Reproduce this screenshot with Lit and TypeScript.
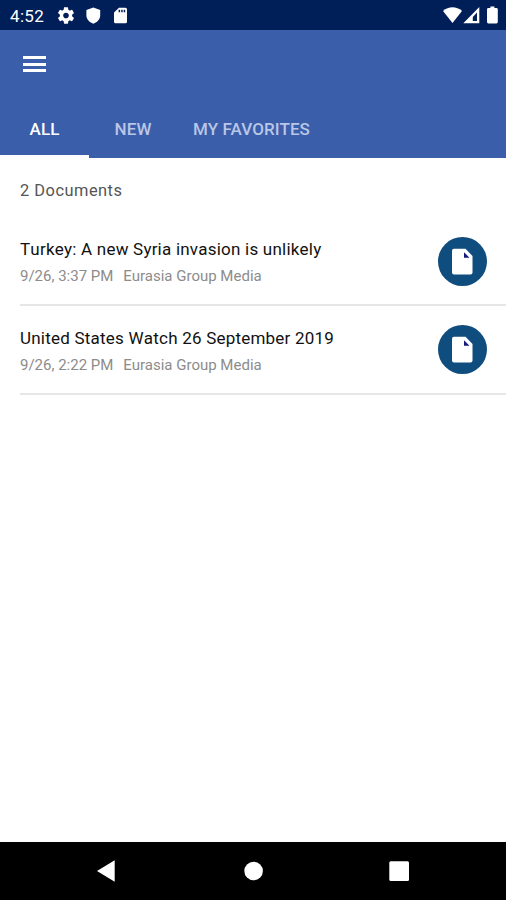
import { LitElement, html, css } from "lit";
import { customElement, property } from "lit/decorators.js";

interface Doc {
  title: string;
  date: string;
  source: string;
}

@customElement("status-bar")
class StatusBar extends LitElement {
  static styles = css`
    :host {
      display: flex;
      justify-content: space-between;
      height: 30px;
      background: #001e57;
      color: #fff;
      font: 400 17px/32px Roboto, sans-serif;
    }
    .side {
      display: flex;
      align-items: flex-start;
    }
    .time {
      width: 46px;
      padding-left: 10px;
      letter-spacing: 0.35px;
    }
    svg {
      display: block;
      fill: #fff;
    }
  `;
  render() {
    return html`
      <div class="side">
        <span class="time">4:52</span>
        <svg width="80" height="30" viewBox="56 0 80 30">
          <svg x="56.2" y="5.7" width="19.6" height="19.6" viewBox="0 0 24 24">
            <path
              d="M19.43 12.98c.04-.32.07-.64.07-.98s-.03-.66-.07-.98l2.11-1.65c.19-.15.24-.42.12-.64l-2-3.46c-.12-.22-.39-.3-.61-.22l-2.49 1c-.52-.4-1.08-.73-1.69-.98l-.38-2.65A.49.49 0 0 0 14 2h-4c-.25 0-.46.18-.49.42l-.38 2.65c-.61.25-1.17.59-1.69.98l-2.49-1c-.23-.09-.49 0-.61.22l-2 3.46c-.13.22-.07.49.12.64l2.11 1.65c-.04.32-.07.65-.07.98s.03.66.07.98l-2.11 1.65c-.19.15-.24.42-.12.64l2 3.46c.12.22.39.3.61.22l2.49-1c.52.4 1.08.73 1.69.98l.38 2.65c.03.24.24.42.49.42h4c.25 0 .46-.18.49-.42l.38-2.65c.61-.25 1.17-.59 1.69-.98l2.49 1c.23.09.49 0 .61-.22l2-3.46c.12-.22.07-.49-.12-.64l-2.11-1.65zM12 15.5c-1.93 0-3.5-1.57-3.5-3.5s1.57-3.5 3.5-3.5 3.5 1.57 3.5 3.5-1.57 3.5-3.5 3.5z"
            />
          </svg>
          <path d="M93.3 7.4l6.9 2.5v5.3c0 3.9-2.7 6.9-6.9 8.5-4.2-1.6-6.9-4.6-6.9-8.5V9.9z" />
          <path
            fill-rule="evenodd"
            d="M119 7.7h6.4q1.6 0 1.6 1.6v12.4q0 1.6-1.6 1.6h-9.8q-1.6 0-1.6-1.6V12.5zM118.6 9.8v2.4h1.5V9.8zM121.2 9.8v2.4h1.5V9.8zM123.7 9.8v2.4h1.5V9.8z"
          />
        </svg>
      </div>
      <svg width="66" height="30" viewBox="440 0 66 30">
        <path d="M443 11C448.5 6.100 456.500 6.100 462 11L452.500 23z" />
        <path fill-rule="evenodd" d="M479.300 7V23.200H463.300zM477 12.600L472.800 17V21H477z" />
        <path
          d="M490.400 8V6.500h4V8h2q1.400 0 1.400 1.400v12.700q0 1.400-1.400 1.400h-8q-1.400 0-1.400-1.400V9.400Q487 8 488.400 8z"
        />
      </svg>
    `;
  }
}

@customElement("app-header")
class AppHeader extends LitElement {
  static styles = css`
    :host {
      display: flex;
      flex-direction: column;
      height: 128px;
      background: #3b5eaa;
      font: 500 17px/20px Roboto, sans-serif;
    }
    .menu {
      display: flex;
      flex-direction: column;
      gap: 3.6px;
      padding: 26px 0 0 23px;
      height: 43px;
    }
    .bar {
      width: 23px;
      height: 3px;
      background: #fff;
    }
    .tabs {
      display: flex;
      height: 59px;
    }
    .tab {
      box-sizing: border-box;
      padding-top: 20px;
      height: 59px;
      color: #b9c6e6;
      text-align: center;
      white-space: nowrap;
      letter-spacing: 0.1px;
    }
    .all {
      width: 89px;
      color: #fff;
      border-bottom: 3px solid #fff;
    }
    .new {
      width: 88px;
    }
    .fav {
      width: 149px;
    }
  `;
  render() {
    return html`
      <div class="menu">
        <span class="bar"></span><span class="bar"></span><span class="bar"></span>
      </div>
      <div class="tabs">
        <div class="tab all">ALL</div>
        <div class="tab new">NEW</div>
        <div class="tab fav">MY FAVORITES</div>
      </div>
    `;
  }
}

@customElement("document-row")
class DocumentRow extends LitElement {
  @property({ attribute: false }) doc!: Doc;
  static styles = css`
    :host {
      display: flex;
      justify-content: space-between;
      box-sizing: border-box;
      height: 88.3px;
      margin-left: 20px;
      padding: 19px 19px 0 0;
      border-bottom: 2px solid #e6e6e6;
      font-family: Roboto, sans-serif;
      white-space: nowrap;
    }
    .title {
      padding-top: 1.45px;
      font-size: 17px;
      line-height: 22px;
      color: #111;
      letter-spacing: 0.22px;
      font-kerning: none;
    }
    .meta {
      display: flex;
      gap: 10px;
      margin-top: 5.85px;
      font-size: 15px;
      line-height: 20px;
      color: #8c8c8c;
    }
    .badge {
      display: block;
      width: 49px;
      height: 49px;
    }
  `;
  render() {
    return html`
      <div>
        <div class="title">${this.doc.title}</div>
        <div class="meta"><span>${this.doc.date}</span><span>${this.doc.source}</span></div>
      </div>
      <svg class="badge" viewBox="0 0 49 49">
        <circle cx="24.5" cy="24.5" r="24.5" fill="#104d7f" />
        <path
          fill="#fff"
          d="M16 11.800h11.500l7 7.200v16.600q0 2-2 2h-16.500q-2 0-2-2V13.800q0-2 2-2z"
        />
        <path fill="#151a78" d="M26 15.200v5.500h5.500z" />
      </svg>
    `;
  }
}

@customElement("nav-bar")
class NavBar extends LitElement {
  static styles = css`
    :host {
      display: block;
      height: 58px;
      background: #000;
    }
    svg {
      display: block;
      fill: #fff;
    }
  `;
  render() {
    return html`
      <svg width="506" height="58" viewBox="0 842 506 58">
        <path d="M97 871L114.700 860.300V881.700z" />
        <circle cx="253.600" cy="871" r="9.300" />
        <rect x="389.300" y="861.300" width="19.700" height="19.700" rx="1.500" />
      </svg>
    `;
  }
}

@customElement("app-root")
class AppRoot extends LitElement {
  static styles = css`
    :host {
      display: flex;
      flex-direction: column;
      height: 900px;
      width: 506px;
      background: #fff;
      font-family: Roboto, sans-serif;
    }
    main {
      flex: 1;
    }
    .count {
      height: 38px;
      padding: 22px 0 0 20px;
      font-size: 16.4px;
      line-height: 22px;
      color: #555;
      letter-spacing: 0.5px;
    }
  `;
  docs: Doc[] = [
    { title: "Turkey: A new Syria invasion is unlikely", date: "9/26, 3:37 PM", source: "Eurasia Group Media" },
    { title: "United States Watch 26 September 2019", date: "9/26, 2:22 PM", source: "Eurasia Group Media" },
  ];
  render() {
    return html`
      <status-bar></status-bar>
      <app-header></app-header>
      <main>
        <div class="count">${this.docs.length} Documents</div>
        ${this.docs.map((d) => html`<document-row .doc=${d}></document-row>`)}
      </main>
      <nav-bar></nav-bar>
    `;
  }
}
